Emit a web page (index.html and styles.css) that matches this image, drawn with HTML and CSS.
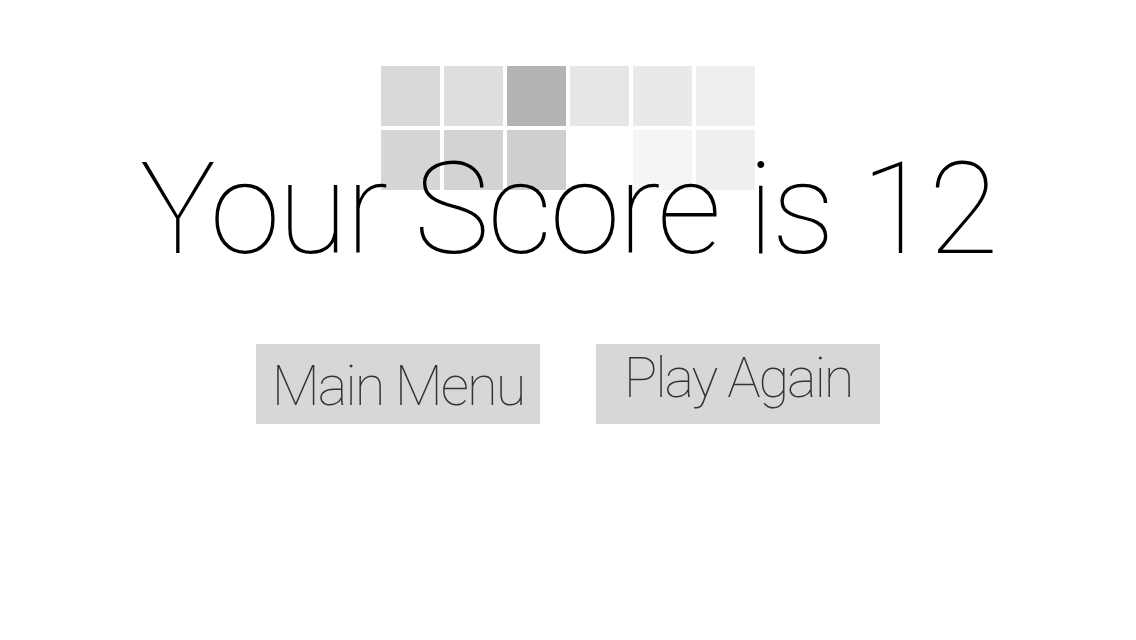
FILE: index.html
```html
<!DOCTYPE html>
<html>
<head>
<meta charset="utf-8">
<link rel="stylesheet" href="styles.css">
</head>
<body>
<div class="scene">
  <div class="tiles">
    <div class="tile" style="background:#d9d9d9"></div>
    <div class="tile" style="background:#dedede"></div>
    <div class="tile" style="background:#b4b4b4"></div>
    <div class="tile" style="background:#e6e6e6"></div>
    <div class="tile" style="background:#e9e9e9"></div>
    <div class="tile" style="background:#eeeeee"></div>
    <div class="tile" style="background:#d6d6d6"></div>
    <div class="tile" style="background:#d3d3d3"></div>
    <div class="tile" style="background:#cfcfcf"></div>
    <div class="tile" style="background:#ffffff"></div>
    <div class="tile" style="background:#f5f5f5"></div>
    <div class="tile" style="background:#efefef"></div>
  </div>
  <h1 class="title">Your Score is 12</h1>
</div>
<div class="buttons">
  <button class="btn btn-main">Main Menu</button>
  <button class="btn btn-play">Play Again</button>
</div>
</body>
</html>
```
FILE: styles.css
```css
html, body {
  margin: 0;
  padding: 0;
  background: #ffffff;
  width: 1136px;
  height: 640px;
  overflow: hidden;
}
body {
  font-family: Roboto, "Liberation Sans", sans-serif;
}
.scene {
  display: grid;
  justify-items: center;
  padding-top: 66px;
}
.tiles {
  grid-area: 1 / 1;
  display: grid;
  grid-template-columns: repeat(6, 59px);
  grid-auto-rows: 60px;
  column-gap: 4px;
  row-gap: 4px;
}
.title {
  grid-area: 1 / 1;
  margin: 79px 0 0 0;
  font-size: 128px;
  font-weight: 100;
  letter-spacing: -2.4px;
  line-height: 1;
  color: #000;
  white-space: nowrap;
}
.buttons {
  display: flex;
  justify-content: center;
  gap: 56px;
  margin-top: 71px;
}
.btn {
  width: 284px;
  height: 80px;
  border: none;
  margin: 0;
  padding: 0;
  background: #d7d7d7;
  font-family: Roboto, "Liberation Sans", sans-serif;
  font-size: 56px;
  font-weight: 100;
  letter-spacing: -2px;
  color: #333;
  line-height: 1;
}
.btn-main {
  padding-top: 4px;
}
.btn-play {
  padding-bottom: 12px;
  letter-spacing: -2.2px;
}
```
